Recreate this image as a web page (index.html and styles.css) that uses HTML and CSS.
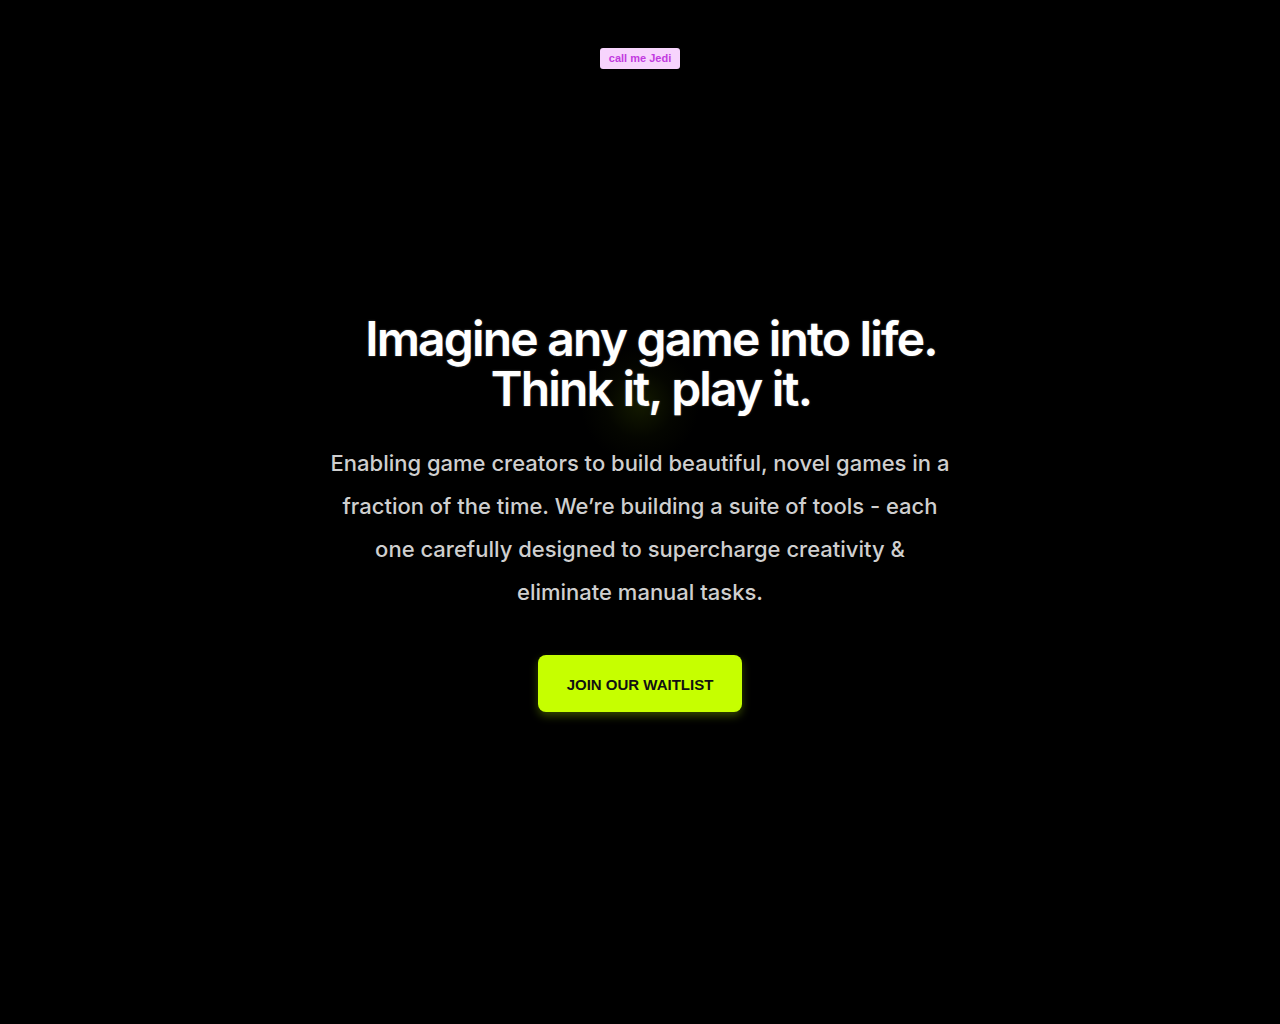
FILE: index.html
```html
<!DOCTYPE html>
<html lang="en">
<head>
<meta charset="utf-8">
<title>call me Jedi</title>
<link rel="stylesheet" href="styles.css">
</head>
<body>
<main class="page">
  <div class="badge">call me Jedi</div>
  <section class="hero">
    <div class="glow"></div>
    <h1 class="title">Imagine any game into life.<br>Think it, play it.</h1>
    <p class="lead">Enabling game creators to build beautiful, novel games in a fraction of the time. We’re building a suite of tools - each one carefully designed to supercharge creativity &amp; eliminate manual tasks.</p>
    <a class="cta" href="#">JOIN OUR WAITLIST</a>
  </section>
</main>
</body>
</html>
```
FILE: styles.css
```css
html, body {
  margin: 0;
  padding: 0;
  background: #000;
}
body {
  font-family: Inter, "Noto Sans", sans-serif;
  color: #fff;
  min-height: 1024px;
}
.page {
  display: flex;
  flex-direction: column;
  align-items: center;
  padding-top: 48px;
}
.badge {
  font-family: "Liberation Sans", Arial, sans-serif;
  font-weight: 700;
  font-size: 11px;
  line-height: 21px;
  height: 21px;
  padding: 0 9px;
  background: #f7d4fd;
  color: #c23be0;
  border-radius: 3px;
}
.hero {
  position: relative;
  display: flex;
  flex-direction: column;
  align-items: center;
  margin-top: 245px;
}
.glow {
  position: absolute;
  left: 50%;
  top: 30px;
  width: 120px;
  height: 120px;
  margin-left: -60px;
  border-radius: 50%;
  background: radial-gradient(circle, rgba(120,160,0,0.16) 0%, rgba(60,80,0,0.07) 40%, rgba(0,0,0,0) 70%);
  pointer-events: none;
}
.title {
  position: relative;
  margin: 0;
  padding-left: 22px;
  font-size: 48px;
  line-height: 50px;
  font-weight: 600;
  letter-spacing: -1.8px;
  text-align: center;
  color: #fff;
  text-shadow: 0 0 2px rgba(255,255,255,0.35);
}
.lead {
  position: relative;
  margin: 28px 0 0;
  width: 626px;
  font-size: 22px;
  line-height: 43px;
  font-weight: 500;
  letter-spacing: 0;
  text-align: center;
  color: #cfcfcf;
}
.cta {
  margin-top: 41px;
  display: flex;
  align-items: center;
  justify-content: center;
  width: 204px;
  height: 57px;
  padding-top: 2px;
  box-sizing: border-box;
  background: #c6ff00;
  color: #111;
  border-radius: 8px;
  font-family: "Liberation Sans", Arial, sans-serif;
  font-weight: 700;
  font-size: 15px;
  text-decoration: none;
  box-shadow: 0 4px 8px rgba(150,200,0,0.35);
}
```
